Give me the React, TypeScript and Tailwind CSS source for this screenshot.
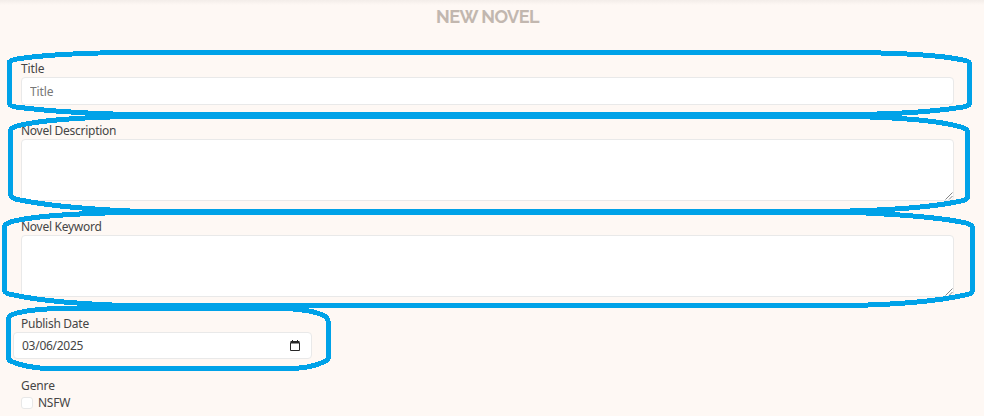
import React from "react";

const field = "block w-full resize-none rounded-[4px] border border-[#e9e9e9] bg-white outline-none";

function ResizeGrip() {
  return (
    <svg className="absolute right-[1px] bottom-[1px]" width="8" height="8" viewBox="0 0 8 8" stroke="#858585" strokeWidth="1">
      <path d="M.5 7.500 7.500 .5M4 7.500 7.500 4" />
    </svg>
  );
}

function TextBlock({ label, className }: { label: string; className: string }) {
  return (
    <div className={className}>
      <label className="block h-[17px] leading-[17px]">{label}</label>
      <div className="relative">
        <textarea className={`${field} h-[62px]`} aria-label={label} />
        <ResizeGrip />
      </div>
    </div>
  );
}

function Highlights() {
  return (
    <svg
      className="pointer-events-none absolute inset-0"
      width="984"
      height="416"
      viewBox="0 0 984 416"
      fill="none"
      stroke="#00a2e8"
      strokeWidth="5"
      strokeLinejoin="round"
      shapeRendering="crispEdges"
    >
      <path d="M9.5 62Q11 60 20 58.5Q60 53 130 52.5H850Q930 53 963 60Q969 61 969.5 63V104Q969 106 963 107Q920 114 850 114.5H130Q65 113 20 107.5Q11 107 9.5 104Z" />
      <path d="M10.5 130Q12 127 19 125.5Q50 118 130 116.5H850Q930 118 961 127Q967 129 967.500 131V197Q967 200 961 201Q925 209 850 211H130Q60 208 20 200Q12 199 10.500 195Z" />
      <path d="M4.500 226Q6 223 14 221Q45 214 125 212.500H855Q935 216 966 223Q972 225 972.500 227V291Q972 294 965 295Q925 304 850 305.500H125Q50 303 14 295Q6 294 4.500 291Z" />
      <path d="M8.500 319Q9 315 17 313Q35 308.500 65 308.500H285Q316 310 326 317Q328 319 328.500 323V358Q328 361 321 363Q310 368 290 368.500H45Q25 367 13 362Q9 361 8.500 358Z" />
    </svg>
  );
}

export default function App() {
  return (
    <main className="relative h-[416px] w-[984px] overflow-hidden bg-[#fef8f4] font-['Noto_Sans','Open_Sans',sans-serif] text-[12px] tracking-[-0.27px] text-[#454545]">
      <div className="h-[5px] bg-linear-to-b from-[#f3ede9] to-[#fef8f4]" />
      <h1 className="h-[55px] pr-[9px] text-center font-['Raleway','Lato',sans-serif] text-[18px] leading-[24px] font-bold tracking-[-0.5px] text-[#c2b7af]">
        NEW NOVEL
      </h1>
      <form className="pr-[30px] pl-[21px]">
        <div className="h-[62px]">
          <label className="block h-[17px] leading-[17px] tracking-[-0.1px]">Title</label>
          <input className={`${field} h-[28px] px-[8px] pt-[1px] tracking-[-0.1px] placeholder:text-[#777777]`} placeholder="Title" />
        </div>
        <TextBlock label="Novel Description" className="h-[96px]" />
        <TextBlock label="Novel Keyword" className="h-[97px]" />
        <label className="block h-[17px] leading-[17px]">Publish Date</label>
        <div className="-ml-[8px] flex h-[27px] w-[299px] items-center justify-between rounded-[4px] border border-[#e9e9e9] bg-white pr-[11px] pl-[8px]">
          <span>03/06/2025</span>
          <svg width="10" height="11" viewBox="0 0 10 11" fill="none" stroke="#262626" strokeWidth="1">
            <path d="M.5 2.500H9.500V10.500H.5ZM.5 1.500H9.500M2.500 0V2M7.500 0V2" />
            <path d="M1 2.500H9" strokeWidth="2" />
          </svg>
        </div>
        <div className="mt-[18px] h-[17px] leading-[17px] tracking-[-0.1px]">Genre</div>
        <label className="flex h-[17px] items-center gap-[5px]">
          <input type="checkbox" className="h-[12px] w-[12px] appearance-none rounded-[3px] border border-[#e8e8e8] bg-white" />
          NSFW
        </label>
      </form>
      <Highlights />
    </main>
  );
}
